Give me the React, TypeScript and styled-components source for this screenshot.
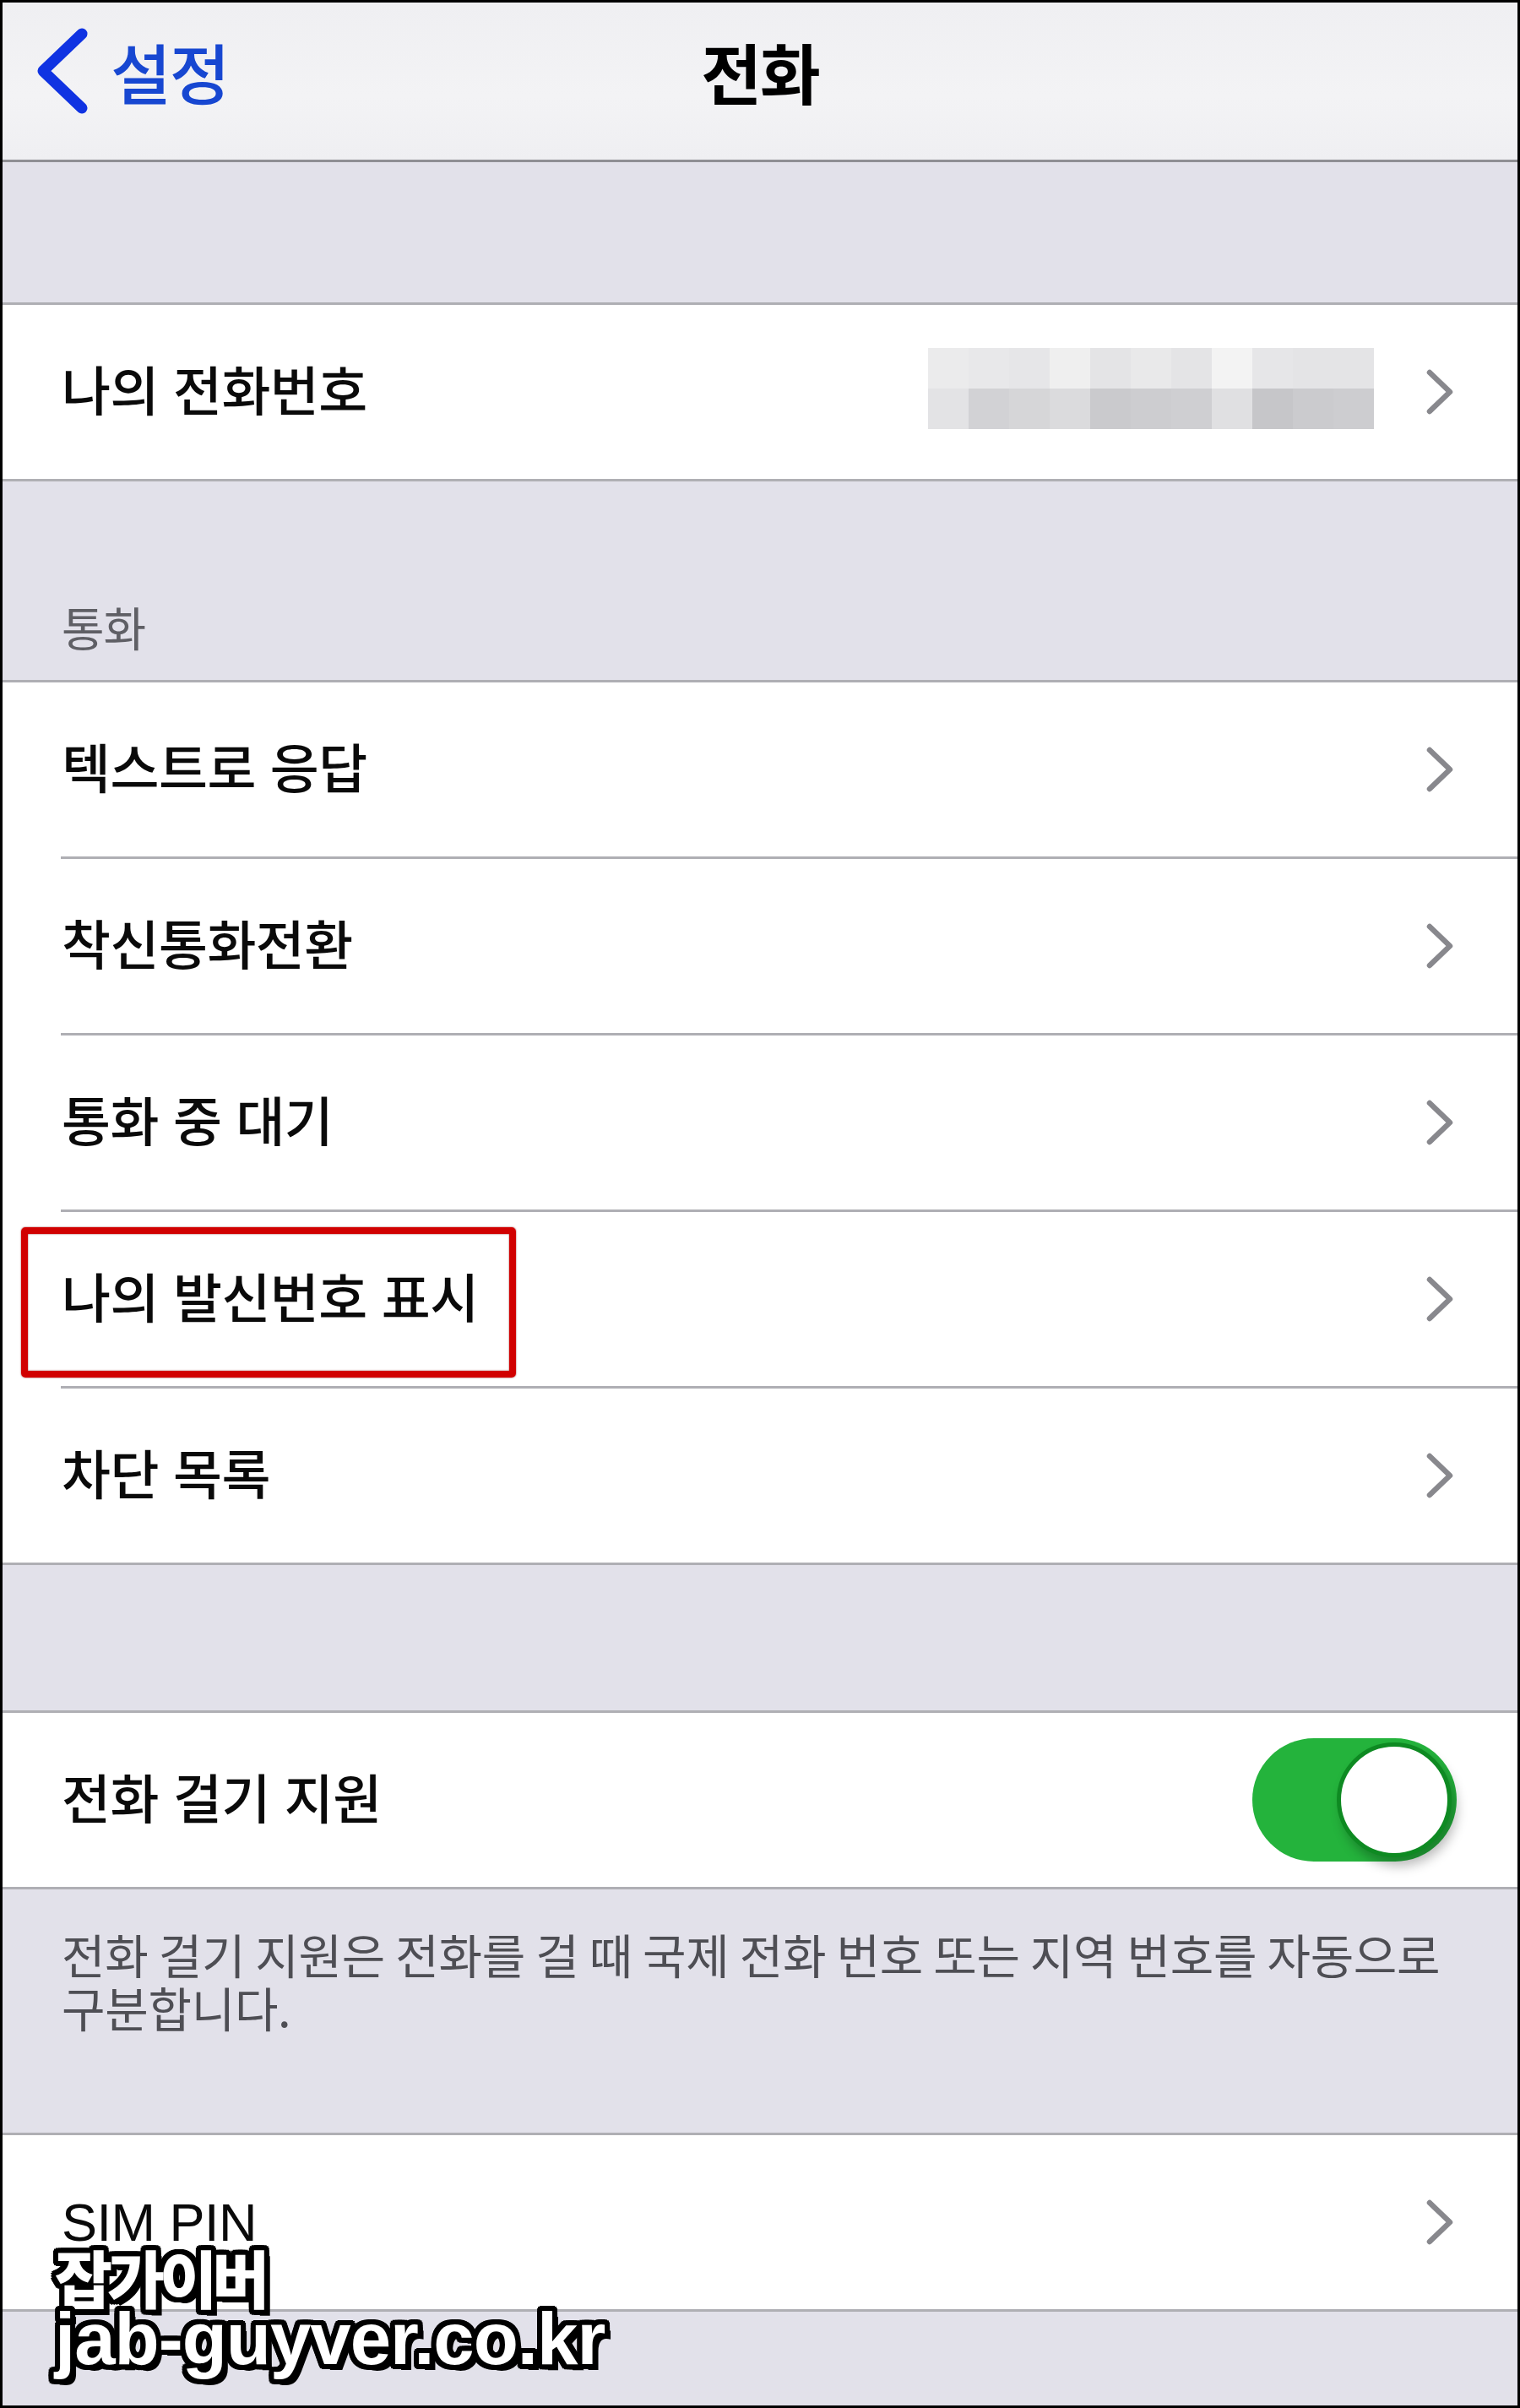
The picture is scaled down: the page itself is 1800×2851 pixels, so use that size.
import React from "react";
import styled, { createGlobalStyle } from "styled-components";

const Global = createGlobalStyle`
  html, body { margin: 0; padding: 0; background: #000; }
  body { font-family: "Liberation Sans", "Noto Sans CJK KR", sans-serif; }
  * { box-sizing: border-box; }
`;

const LINE = "#afafb4";

const Screen = styled.div`
  position: relative;
  width: 1800px;
  height: 2851px;
  border: 3px solid #000;
  background: #e2e1ea;
  overflow: hidden;
  display: flex;
  flex-direction: column;
`;

const NavBar = styled.header`
  height: 189px;
  flex: none;
  background: linear-gradient(180deg, #efeff2 0%, #f3f3f5 60%, #efeff2 100%);
  border-bottom: 3px solid #8f8f94;
  display: grid;
  grid-template-columns: 1fr auto 1fr;
  align-items: center;
  padding: 0 0 24px 0;
`;

const BackButton = styled.div`
  display: flex;
  align-items: center;
  gap: 26px;
  padding-left: 38px;
`;

const BackLabel = styled.span`
  font-family: "Noto Sans CJK KR", sans-serif;
  font-size: 78px;
  font-weight: 500;
  color: #1747d1;
  line-height: 1;
  letter-spacing: -2px;
`;

const NavTitle = styled.h1`
  margin: 0;
  font-family: "Noto Sans CJK KR", sans-serif;
  font-size: 78px;
  font-weight: 700;
  color: #000;
  line-height: 1;
  letter-spacing: -2px;
`;

const Spacer = styled.div<{ $h: number }>`
  height: ${(p) => p.$h}px;
  flex: none;
`;

const SectionHeader = styled.div<{ $h: number }>`
  height: ${(p) => p.$h}px;
  flex: none;
  display: flex;
  align-items: flex-end;
  padding: 0 0 34px 70px;
  font-family: "Noto Sans CJK KR", sans-serif;
  font-size: 55px;
  color: #5f5f65;
  line-height: 60px;
  letter-spacing: -1px;
`;

const Group = styled.section`
  flex: none;
  background: #fff;
  border-top: 3px solid ${LINE};
  border-bottom: 3px solid ${LINE};
  display: flex;
  flex-direction: column;
`;

const Row = styled.div`
  position: relative;
  height: 206px;
  display: flex;
  align-items: center;
  justify-content: space-between;
  padding: 0 74px 0 70px;
`;

const Separator = styled.div`
  height: 3px;
  margin-left: 69px;
  background: ${LINE};
`;

const Label = styled.span`
  font-size: 63px;
  font-weight: 500;
  color: #0a0a0a;
  line-height: 1;
  letter-spacing: -0.5px;
`;

const Right = styled.div`
  display: flex;
  align-items: center;
  gap: 60px;
`;

const Mosaic = styled.div`
  display: grid;
  grid-template-columns: repeat(11, 48px);
  grid-template-rows: 48px 48px;
  margin-top: -8px;
`;

const Cell = styled.div<{ $c: string }>`
  background: ${(p) => p.$c};
`;

const Highlight = styled.div`
  position: absolute;
  left: 22px;
  top: 18px;
  width: 586px;
  height: 178px;
  border: 8px solid #d10000;
  border-radius: 5px;
  box-shadow: 0 0 2px rgba(120, 0, 0, 0.8), inset 0 0 2px rgba(120, 0, 0, 0.8);
  pointer-events: none;
`;

const Toggle = styled.div`
  width: 242px;
  height: 146px;
  border-radius: 73px;
  background: #24b33c;
  display: flex;
  align-items: center;
  justify-content: flex-end;
  padding-right: 6px;
  margin-right: -2px;
`;

const Knob = styled.div`
  width: 136px;
  height: 136px;
  border-radius: 50%;
  background: #fff;
  border: 5px solid #0e8a22;
  box-shadow: 6px 10px 14px rgba(0, 0, 0, 0.28);
`;

const Footer = styled.div`
  height: 288px;
  flex: none;
  padding: 44px 30px 0 70px;
  font-family: "Noto Sans CJK KR", sans-serif;
  font-size: 56px;
  line-height: 63px;
  color: #4e4e54;
  letter-spacing: -0.3px;
  white-space: nowrap;
`;

const Watermark = styled.div`
  position: absolute;
  left: 62px;
  bottom: 40px;
  display: flex;
  flex-direction: column;
  color: #fff;
  font-weight: 900;
  text-shadow:
    -5px -5px 0 #000, 5px -5px 0 #000, -5px 5px 0 #000, 5px 5px 0 #000,
    0 -6px 0 #000, 0 6px 0 #000, -6px 0 0 #000, 6px 0 0 #000,
    -3px -6px 0 #000, 3px -6px 0 #000, -3px 6px 0 #000, 3px 6px 0 #000,
    -6px -3px 0 #000, 6px -3px 0 #000, -6px 3px 0 #000, 6px 3px 0 #000,
    7px 7px 0 #000;
`;

const WatermarkKo = styled.span`
  font-family: "Noto Sans CJK KR", sans-serif;
  font-size: 74px;
  letter-spacing: -6px;
  line-height: 70px;
`;

const WatermarkUrl = styled.span`
  font-family: "Liberation Sans", sans-serif;
  font-weight: 700;
  font-size: 87px;
  letter-spacing: -1px;
  line-height: 78px;
`;

const Chevron = () => (
  <svg width="36" height="58" viewBox="0 0 36 58" aria-hidden>
    <polyline
      points="6,6 30,29 6,52"
      fill="none"
      stroke="#88888d"
      strokeWidth="6.5"
      strokeLinecap="round"
      strokeLinejoin="round"
    />
  </svg>
);

const BackChevron = () => (
  <svg width="64" height="104" viewBox="0 0 64 104" aria-hidden>
    <polyline
      points="56,8 10,52 56,96"
      fill="none"
      stroke="#1033e2"
      strokeWidth="13"
      strokeLinecap="round"
      strokeLinejoin="round"
    />
  </svg>
);

const top = ["#ebebec", "#e8e8ea", "#e6e6e8", "#efefef", "#e4e4e6", "#e9e9ea", "#e4e4e6", "#f3f3f3", "#e6e6e8", "#e4e4e6", "#e4e4e6"];
const bottom = ["#e3e3e5", "#d2d2d5", "#d6d6d8", "#dbdbdd", "#cacacd", "#cdcdd0", "#cfcfd2", "#e0e0e2", "#c6c6c9", "#cbcbce", "#cdcdd0"];

const callRows = ["텍스트로 응답", "착신통화전환", "통화 중 대기", "나의 발신번호 표시", "차단 목록"];

export default function App() {
  return (
    <>
      <Global />
      <Screen>
        <NavBar>
          <BackButton>
            <BackChevron />
            <BackLabel>설정</BackLabel>
          </BackButton>
          <NavTitle>전화</NavTitle>
          <div />
        </NavBar>

        <Spacer $h={166} />

        <Group>
          <Row>
            <Label>나의 전화번호</Label>
            <Right>
              <Mosaic>
                {top.map((c, i) => (
                  <Cell key={"t" + i} $c={c} />
                ))}
                {bottom.map((c, i) => (
                  <Cell key={"b" + i} $c={c} />
                ))}
              </Mosaic>
              <Chevron />
            </Right>
          </Row>
        </Group>

        <SectionHeader $h={235}>통화</SectionHeader>

        <Group>
          {callRows.map((label, i) => (
            <React.Fragment key={label}>
              {i > 0 && <Separator />}
              <Row>
                <Label>{label}</Label>
                <Chevron />
                {label === "나의 발신번호 표시" && <Highlight />}
              </Row>
            </React.Fragment>
          ))}
        </Group>

        <Spacer $h={172} />

        <Group>
          <Row>
            <Label>전화 걸기 지원</Label>
            <Toggle>
              <Knob />
            </Toggle>
          </Row>
        </Group>

        <Footer>
          전화 걸기 지원은 전화를 걸 때 국제 전화 번호 또는 지역 번호를 자동으로
          <br />
          구분합니다.
        </Footer>

        <Group>
          <Row>
            <Label>SIM PIN</Label>
            <Chevron />
          </Row>
        </Group>

        <Watermark>
          <WatermarkKo>잡가이버</WatermarkKo>
          <WatermarkUrl>jab-guyver.co.kr</WatermarkUrl>
        </Watermark>
      </Screen>
    </>
  );
}
